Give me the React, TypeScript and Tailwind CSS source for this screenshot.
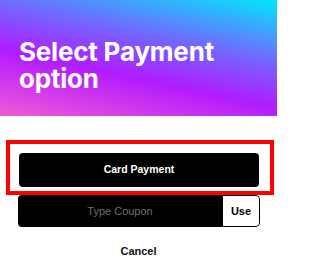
export default function App() {
  return (
    <div className="w-[277px] h-[273px] bg-white overflow-hidden font-['Liberation_Sans',Arial,sans-serif]">
      <div className="h-[116px] pt-[38px] pl-[19px] bg-[linear-gradient(12deg,#f25ad6_0%,#b11cff_38%,#6f6cff_66%,#00e8fb_100%)]">
        <h1 className="font-['Inter',sans-serif] font-bold text-white text-[26px] leading-[27px] tracking-[-0.2px]">
          Select Payment
          <br />
          option
        </h1>
      </div>

      <div className="mt-[24px] ml-[6px] w-[268px] h-[55px] border-4 border-[#ff0000] pt-[9px] pl-[9px] pr-[11px]">
        <button className="w-full h-[34px] rounded-[4px] bg-black text-white text-[10.5px] font-bold">
          Card Payment
        </button>
      </div>

      <div className="ml-[18px] w-[242px] h-[32px] flex rounded-[4px] overflow-hidden">
        <input
          placeholder="Type Coupon"
          className="flex-1 min-w-0 bg-black text-white text-center text-[11px] placeholder:text-[#6e6e6e] outline-none"
        />
        <button className="w-[38px] bg-white border border-black rounded-r-[4px] text-black text-[11px] font-bold">
          Use
        </button>
      </div>

      <div className="mt-[18px] flex justify-center">
        <button className="text-[11px] font-bold text-[#111] leading-[13px]">Cancel</button>
      </div>
    </div>
  );
}
